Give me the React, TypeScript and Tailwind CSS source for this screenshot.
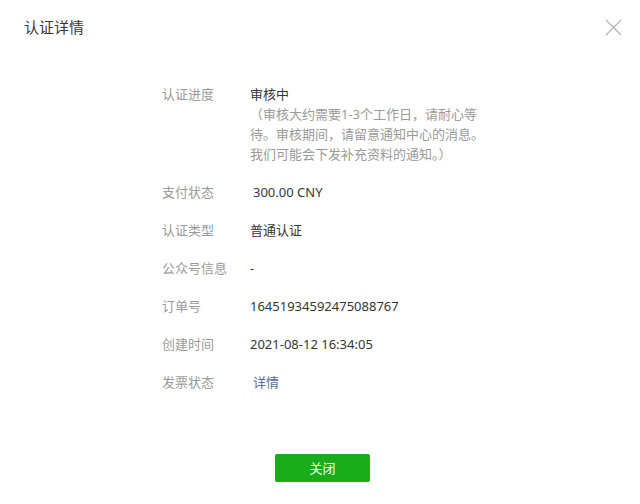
import React from 'react';

const rows = [
  { label: '支付状态', value: '300.00 CNY', pad: true },
  { label: '认证类型', value: '普通认证' },
  { label: '公众号信息', value: '-' },
  { label: '订单号', value: '16451934592475088767' },
  { label: '创建时间', value: '2021-08-12 16:34:05' },
];

export default function App() {
  return (
    <div className="w-[640px] h-[504px] bg-white flex flex-col text-[13px] leading-[19px] [font-family:'Noto_Sans','Noto_Sans_CJK_SC',sans-serif]">
      {/* Header */}
      <div className="flex items-center justify-between pl-6 pr-[18px] pt-[17px] h-[37px]">
        <h1 className="text-[15px] text-[#353535] font-normal">认证详情</h1>
        <button className="w-[17px] h-[17px] text-[#b2b2b2]">
          <svg viewBox="0 0 17 17" className="w-[17px] h-[17px]" fill="none" stroke="currentColor" strokeWidth="1.2">
            <path d="M1 1L16 16M16 1L1 16" />
          </svg>
        </button>
      </div>

      {/* Details */}
      <div className="flex flex-col gap-[19px] pl-[162px] pt-[47px]">
        <div className="flex leading-[20px]">
          <div className="w-[88px] text-[#9a9a9a]">认证进度</div>
          <div className="flex flex-col">
            <span className="text-[#353535]">审核中</span>
            <span className="text-[#9a9a9a]">（审核大约需要1-3个工作日，请耐心等</span>
            <span className="text-[#9a9a9a]">待。审核期间，请留意通知中心的消息。</span>
            <span className="text-[#9a9a9a]">我们可能会下发补充资料的通知。）</span>
          </div>
        </div>
        {rows.map((row) => (
          <div key={row.label} className="flex">
            <div className="w-[88px] text-[#9a9a9a]">{row.label}</div>
            <div className={`text-[#353535] ${row.pad ? 'pl-[3px]' : ''}`}>{row.value}</div>
          </div>
        ))}
        <div className="flex">
          <div className="w-[88px] text-[#9a9a9a]">发票状态</div>
          <a className="pl-[3px] text-[#576b95]">详情</a>
        </div>
      </div>

      {/* Footer */}
      <div className="mt-auto flex justify-center pb-[22px] pl-[5px]">
        <button className="w-[95px] h-[28px] rounded-[2px] bg-[#1aad19] text-white text-[13px]">关闭</button>
      </div>
    </div>
  );
}
